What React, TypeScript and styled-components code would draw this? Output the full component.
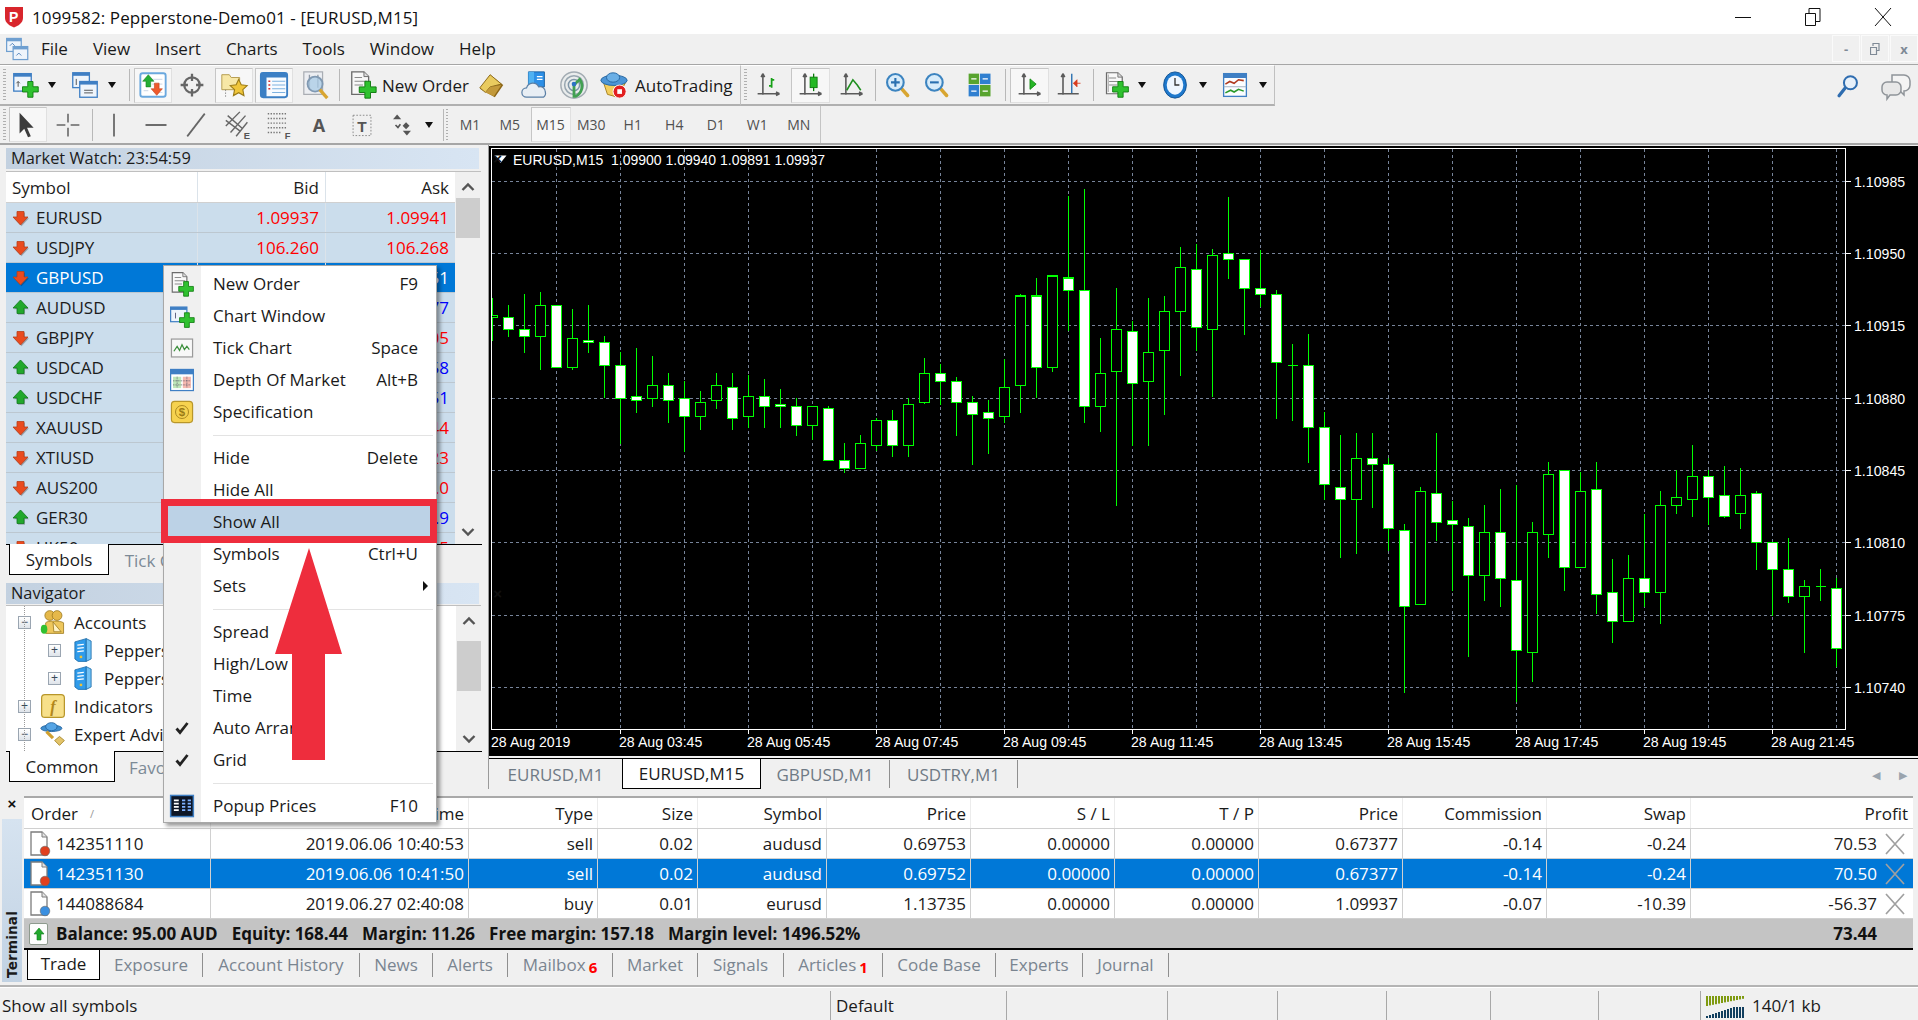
import React from 'react';
import styled, { createGlobalStyle } from 'styled-components';

const UI = `"Open Sans", "Noto Sans", "Liberation Sans", sans-serif`;

const Global = createGlobalStyle`
  html, body { margin: 0; padding: 0; background: #f0f0f0; }
  * { box-sizing: border-box; }
`;

const Page = styled.div`
  position: relative; width: 1918px; height: 1020px; overflow: hidden;
  background: #f0f0f0; color: #1a1a1a; font-family: ${UI}; font-size: 17px;
  display: flex; flex-direction: column;
`;

/* ---- title / menu ---- */
const TitleBar = styled.div`
  height: 34px; background: #fff; display: flex; align-items: center; padding-left: 3px; flex: none;
`;
const TitleText = styled.div`font-size: 17px; margin-left: 7px; color: #111; letter-spacing: .1px;`;
const WinButtons = styled.div`margin-left: auto; display: flex;`;
const WinButton = styled.div`
  width: 70px; height: 34px; display: flex; align-items: center; justify-content: center;
`;
const MenuBar = styled.div`
  height: 31px; flex: none; display: flex; align-items: center; padding-left: 5px;
  border-bottom: 1px solid #a6a6a6;
`;
const MenuItems = styled.div`display: flex; gap: 25px; margin-left: 10px; font-size: 17px; padding-bottom: 2px;`;
const MdiButtons = styled.div`margin-left: auto; display: flex; gap: 1px; align-self: flex-start;  padding-top: 1px;`;
const MdiButton = styled.div`
  width: 28px; height: 27px; border: 1px solid #fafafa; display: flex; align-items: center; justify-content: center;
  color: #7f8a96; font-size: 13px; font-weight: 700;
`;

/* ---- toolbars ---- */
const ToolRow = styled.div<{ $h: number; $line?: boolean }>`
  height: ${p => p.$h}px; flex: none; display: flex; align-items: stretch;
  ${p => p.$line ? 'border-bottom: 2px solid #a6a6a6;' : ''}
`;
const ToolGroup = styled.div<{ $w: number }>`
  width: ${p => p.$w}px; flex: none; display: flex; align-items: center;
  border-right: 1px solid #c0c0c0; border-bottom: 2px solid #b0b0b0; border-top: 1px solid #fff;
`;
const ToolGroupFlat = styled(ToolGroup)`border-bottom: none; border-top: none; border-right: 1px solid #c4c4c4;`;
const Grip = styled.div`
  width: 3px; height: 32px; margin: 0 3px 0 3px; flex: none;
  background: repeating-linear-gradient(to bottom, #b0b0b0 0 1px, transparent 1px 3px);
`;
const TfGrip = styled(Grip)`width: 2px; margin: 0 0 0 2px;`;
const ToolBtn = styled.div<{ $w?: number; $ml?: number; $active?: boolean }>`
  width: ${p => p.$w ?? 38}px; height: 35px; margin-left: ${p => p.$ml ?? 0}px; flex: none;
  display: flex; align-items: center; justify-content: center;
  ${p => p.$active ? 'background: #f7f7f7; border: 1px solid #e0e0e0; border-top-color: #c6c6c6; border-left-color: #c6c6c6;' : ''}
`;
const ToolSep = styled.div<{ $ml: number }>`
  width: 1px; height: 32px; background: #b8b8b8; margin-left: ${p => p.$ml}px; flex: none;
`;
const Drop = styled.div<{ $ml?: number; $w?: number }>`
  width: ${p => p.$w ?? 14}px; margin-left: ${p => p.$ml ?? 0}px; flex: none; display: flex; justify-content: center;
  &::after { content: ''; border: 4px solid transparent; border-top: 6px solid #111; border-bottom: 0; }
`;
const ToolText = styled.span<{ $ml?: number }>`
  font-size: 17px; margin-left: ${p => p.$ml ?? 0}px; white-space: nowrap; color: #1a1a1a;
`;
const LetterTool = styled.b`color: #555; font-size: 18px;`;
const TF = styled.div<{ $active?: boolean; $w?: number; $ml?: number }>`
  width: ${p => p.$w ?? 41.5}px; height: 35px; display: flex; align-items: center; justify-content: center; flex: none;
  font-size: 14px; color: #505050; margin-left: ${p => p.$ml ?? 0}px;
  ${p => p.$active ? 'background: #f7f7f7; border: 1px solid #e0e0e0; border-top-color: #c6c6c6; border-left-color: #c6c6c6;' : ''}
`;
const ToolRight = styled.div`margin-left: auto; display: flex; align-items: center; gap: 19px; padding-right: 6px;`;

/* ---- main ---- */
const Main = styled.div`height: 644px; flex: none; display: flex;`;
const LeftCol = styled.div`width: 489px; flex: none; border-right: 1px solid #9a9a9a; padding: 3px 0 0 0;`;
const PanelTitle = styled.div<{ $mt?: number }>`
  height: 21px; margin: ${p => p.$mt ?? 0}px 9px 0 6px; padding: 0 0 3px 5px;
  background: linear-gradient(to right, #c3d1e0, #d8e5f3);
  display: flex; align-items: center; font-size: 16.4px; position: relative; color: #1c1c1c;
`;
const PanelClose = styled.div`
  position: absolute; right: -23px; top: 1px; font-size: 15px; font-weight: 800; color: #111; line-height: 19px;
  font-family: "Liberation Sans", sans-serif;
`;
const WatchBody = styled.div`
  height: 373px; margin: 2px 0 0 6px; display: flex; border-top: 1px solid #bfbfbf; overflow: hidden; width: 475px;
`;
const WatchTable = styled.div`width: 449px; flex: none;`;
const WatchRow = styled.div<{ $sel?: boolean; $head?: boolean }>`
  height: ${p => p.$head ? 31 : 30}px; display: grid; grid-template-columns: 191px 128px 130px;
  background: ${p => p.$sel ? '#0078d7' : p.$head ? '#fff' : '#cbddec'};
  border-bottom: 1px solid ${p => p.$head ? '#d0d0d0' : '#bcc7d0'};
  color: ${p => p.$sel ? '#fff' : '#1c1c1c'}; font-size: 17px;
`;
const SymbolCell = styled.div`display: flex; align-items: center; padding-left: 6px; gap: 6px; white-space: nowrap;`;
const QuoteCell = styled.div<{ $c?: string }>`
  display: flex; align-items: center; justify-content: flex-end; padding-right: 6px;
  border-left: 1px solid #dbe3ea; color: ${p => p.$c ?? 'inherit'};
`;
const ScrollCol = styled.div`width: 25px; flex: none; display: flex; flex-direction: column; align-items: center; background: #f0f0f0;`;
const ScrollThumb = styled.div<{ $t: number; $h: number }>`
  width: 24px; height: ${p => p.$h}px; margin-top: ${p => p.$t}px; background: #cdcdcd;
`;
const Chevron = styled.div<{ $down?: boolean; $t?: number; $auto?: boolean }>`
  margin-top: ${p => p.$auto ? 'auto' : `${p.$t ?? 0}px`}; height: 12px; display: flex; align-items: center;
  ${p => p.$auto ? 'margin-bottom: 6px;' : ''}
  svg { transform: ${p => p.$down ? 'rotate(180deg)' : 'none'}; }
`;
const SideTabs = styled.div`
  height: 30px; margin-left: 6px; width: 476px; display: flex; border-top: 1px solid #000; position: relative;
`;
const SideTab = styled.div<{ $w: number; $on?: boolean; $ml?: number }>`
  width: ${p => p.$w}px; margin-left: ${p => p.$ml ?? 0}px; height: ${p => p.$on ? 31 : 30}px; display: flex; align-items: center; justify-content: center; font-size: 17px;
  white-space: nowrap;
  ${p => p.$on ? 'background: #fff; border: 1px solid #000; border-top: none; margin-top: -1px;' : 'color: #7c8a96;'}
`;
const PanelGap = styled.div<{ $h: number }>`
  height: ${p => p.$h}px;
`;
const TreeBody = styled.div`
  height: 146px; margin: 1px 0 0 6px; width: 475px; display: flex; background: #fff; border-top: 1px solid #bfbfbf; overflow: hidden;
`;
const TreeList = styled.div`flex: 1; position: relative; padding-top: 2px;`;
const TreeRow = styled.div<{ $indent?: number }>`
  height: 28px; display: flex; align-items: center; padding-left: ${p => 12 + (p.$indent ?? 0) * 30}px; font-size: 17px; white-space: nowrap;
`;
const Expander = styled.div`
  width: 13px; height: 13px; border: 1px solid #9aa5b1; background: linear-gradient(#fff, #dfe4ea);
  display: flex; align-items: center; justify-content: center; font: 12px/11px "Liberation Sans", sans-serif; color: #3a4a5a; flex: none;
  margin-right: 9px;
`;
const TreeIcon = styled.div`width: 26px; height: 26px; display: flex; align-items: center; justify-content: center; margin-right: 8px; flex: none;`;
const TreeGuide = styled.div`
  position: absolute; left: 18px; top: 0; bottom: 0; border-left: 1px dotted #9a9a9a;
`;

/* ---- chart ---- */
const ChartCol = styled.div`flex: 1; display: flex; flex-direction: column; padding-top: 1px;`;
const ChartBox = styled.div`height: 610px; background: #000; flex: none; line-height: 0;`;
const ChartHeader = styled.text`white-space: pre; font-size: 14px;`;
const ChartTabs = styled.div`
  height: 31px; margin-top: 2px; border-top: 1px solid #000; display: flex; position: relative; font-size: 17px;
`;
const ChartTab = styled.div<{ $w: number; $on?: boolean; $sep?: boolean }>`
  width: ${p => p.$w}px; height: 28px; display: flex; align-items: center; justify-content: center; flex: none; white-space: nowrap;
  margin-top: ${p => p.$on ? 0 : 1}px;
  ${p => p.$on ? 'background: #fff; border: 1px solid #000; border-top: none; height: 30px;' : 'color: #6f7a85;'}
  ${p => p.$sep ? 'border-right: 1px solid #8f8f8f;' : ''}
`;
const TabArrows = styled.div`
  margin-left: auto; display: flex; align-items: center; gap: 19px; padding-right: 11px; color: #9aa4ae; font-size: 11px;
`;

/* ---- terminal ---- */
const Terminal = styled.div`height: 196px; flex: none; display: flex; border-top: 0;`;
const TermSide = styled.div`width: 24px; flex: none; display: flex; flex-direction: column; align-items: center; padding-top: 6px;`;
const TermClose = styled.div`font: 800 15px/18px "Liberation Sans", sans-serif; color: #111;`;
const TermLabel = styled.div`
  margin-top: 6px; width: 20px; height: 163px; background: linear-gradient(to bottom, #d6e3f0, #c1d2e3);
  display: flex; align-items: flex-end; justify-content: center; padding-bottom: 4px;
`;
const TermLabelText = styled.span`
  writing-mode: vertical-rl; transform: rotate(180deg); font: 700 13.5px "DejaVu Sans", sans-serif; color: #1a1a1a; letter-spacing: .2px;
`;
const TermMain = styled.div`flex: 1; padding-top: 7px; display: flex; flex-direction: column; min-width: 0;`;
const TermTable = styled.div`border-top: 2px solid #a9a9a9; background: #fff; margin-right: 5px;`;
const TermRow = styled.div<{ $sel?: boolean; $head?: boolean }>`
  height: ${p => p.$head ? 31 : 30}px; display: grid;
  grid-template-columns: 187px 258px 129px 100px 129px 144px 144px 144px 144px 144px 144px 222px;
  background: ${p => p.$sel ? '#0078d7' : '#fff'}; color: ${p => p.$sel ? '#fff' : '#1a1a1a'};
  border-bottom: 1px solid #d0d0d0; font-size: 17px;
`;
const TermCell = styled.div<{ $left?: boolean; $pr?: number; $head?: boolean }>`
  display: flex; align-items: center; justify-content: ${p => p.$left ? 'flex-start' : 'flex-end'};
  padding: 0 ${p => p.$pr ?? 4}px 0 ${p => p.$left ? 7 : 0}px; border-right: 1px solid ${p => p.$head ? '#ececec' : '#d0d0d0'}; white-space: nowrap; overflow: hidden;
  &:last-child { border-right: none; }
`;
const OrderCell = styled(TermCell)`padding-left: 5px; gap: 5px;`;
const SortMark = styled.span`color: #999; font-size: 11px; margin-left: 12px;`;
const CloseMark = styled.span`
  width: 22px; display: flex; justify-content: center; flex: none; margin-left: 7px;
`;
const SummaryRow = styled.div`
  height: 31px; background: #c4c4c4; border-bottom: 2px solid #000; display: flex; align-items: center;
  padding: 0 36px 0 5px; font-weight: 700; font-size: 17px; white-space: nowrap; color: #111;
`;
const SummaryIcon = styled.div`
  width: 19px; height: 22px; background: #fdfdfd; border: 1px solid #8e9a8e; border-radius: 2px; margin-right: 8px;
  display: flex; align-items: center; justify-content: center; flex: none;
`;
const SummaryItem = styled.span`margin-right: 14px;`;
const SummaryTotal = styled.span`margin-left: auto;`;
const TermTabs = styled.div`height: 31px; display: flex; align-items: flex-start; font-size: 17px;`;
const TermTab = styled.div<{ $w: number; $on?: boolean }>`
  width: ${p => p.$w}px; flex: none; height: ${p => p.$on ? 30 : 24}px; display: flex; align-items: center; justify-content: center; white-space: nowrap; position: relative;
  ${p => p.$on ? 'background: #fff; border: 1px solid #000; border-top: none; margin-left: 3px; padding-bottom: 2px;' : 'color: #7a8590; border-right: 1px solid #8f8f8f; margin-top: 3px; padding-bottom: 2px;'}
`;
const TabBadge = styled.span`color: #f00; font-weight: 700; font-size: 15px; margin: 6px 0 0 3px; line-height: 14px;`;
const Status = styled.div`
  height: 35px; flex: none; border-top: 2px solid #b4b4b4; display: flex; font-size: 17px;
  box-shadow: inset 0 1px 0 #fff;
`;
const StatusCell = styled.div<{ $w?: number; $grow?: boolean }>`
  ${p => p.$grow ? 'flex: 1;' : `width: ${p.$w}px; flex: none;`}
  display: flex; align-items: center; padding-left: ${p => p.$grow ? 5 : 2}px; margin: 4px 0 0 0; gap: 6px;
  &+& { border-left: 1px solid #a8a8a8; padding-left: 5px; }
`;

/* ---- context menu and overlays ---- */
const Menu = styled.div`
  position: absolute; left: 163px; top: 265px; width: 274px; height: 558px; background: #fff; border: 1px solid #a8a8a8;
  box-shadow: 3px 3px 4px rgba(0,0,0,.4); padding-top: 2px; z-index: 5;
  background-image: linear-gradient(to right, #f0f0f0 37px, transparent 37px);
`;
const MenuRow = styled.div<{ $hi?: boolean }>`
  height: 32px; display: flex; align-items: center; font-size: 17px; color: #1a1a1a; position: relative;
  padding: 0 18px 2px 49px; justify-content: space-between; white-space: nowrap;
  ${p => p.$hi ? 'background: #bcd2e6;' : ''}
`;
const MenuIcon = styled.div`
  position: absolute; left: 2px; top: 3px; width: 32px; height: 26px; display: flex; align-items: center; justify-content: center;
`;
const MenuSep = styled.div`
  height: 14px; margin-left: 49px; margin-right: 3px; display: flex; align-items: center;
  &::after { content: ''; flex: 1; height: 1px; background: #e3e3e3; }
`;
const SubArrow = styled.span`
  position: absolute; right: 8px; top: 11px; border: 5px solid transparent; border-left: 5px solid #111; border-right: 0;
`;
const RedBox = styled.div`
  position: absolute; left: 161px; top: 499px; width: 276px; height: 44px; border: 7px solid #ee2d3d; z-index: 6;
`;
const ArrowSvg = styled.svg`position: absolute; left: 270px; top: 545px; z-index: 7;`;

/* ---- icons ---- */
const Svg: React.FC<{ s?: number; vb?: string; children: React.ReactNode }> = ({ s = 28, vb = '0 0 32 32', children }) => (
  <svg width={s} height={s} viewBox={vb}>{children}</svg>
);
const Plus = ({ x = 20, y = 22 }: { x?: number; y?: number }) => (
  <path d={`M${x - 3} ${y - 9}h6v6h6v6h-6v6h-6v-6h-6v-6h6z`} fill="#2fc12f" stroke="#0f7a0f" strokeWidth="1" />
);
const Win = ({ x, y, w = 18, h = 18, c = '#3f7fc4' }: { x: number; y: number; w?: number; h?: number; c?: string }) => (
  <g>
    <rect x={x} y={y} width={w} height={h} fill="#eef4fb" stroke={c} strokeWidth="1.5" />
    <rect x={x} y={y} width={w} height={3.5} fill={c} />
  </g>
);
const Doc = ({ x = 4, y = 2 }: { x?: number; y?: number }) => (
  <g>
    <path d={`M${x} ${y}h13l5 5v19h-18z`} fill="#f8f8f8" stroke="#6b6b6b" strokeWidth="1.4" />
    <path d={`M${x + 13} ${y}v5h5`} fill="#ddd" stroke="#6b6b6b" />
    <path d={`M${x + 3} ${y + 6}h8M${x + 3} ${y + 10}h13M${x + 3} ${y + 14}h9`} stroke="#8a8a8a" strokeWidth="1.2" />
  </g>
);
const Axes = () => (
  <path d="M9 3v24M3 26h25M9 3l-2 4M9 3l2 4M28 26l-4-2M28 26l-4 2" stroke="#5a5a5a" strokeWidth="1.8" fill="none" />
);
const Magnifier = ({ sign }: { sign: '+' | '-' | '' }) => (
  <g>
    <path d="M19 19l8 9" stroke="#d8a530" strokeWidth="4" strokeLinecap="round" />
    <circle cx="13" cy="13" r="9.5" fill="#d8ecfa" stroke="#3c84c0" strokeWidth="2.4" />
    {sign && <path d={`M8 13h10${sign === '+' ? 'M13 8v10' : ''}`} stroke="#2a70b0" strokeWidth="2.4" />}
  </g>
);

const Icons = {
  logo: <svg width="22" height="22" viewBox="0 0 22 22"><path d="M2 1h18v11c0 5-5 8-9 9.500C7 20 2 17 2 12z" fill="#d8262c" /><text x="6" y="16" fontSize="14" fontWeight="700" fontFamily="Liberation Sans" fill="#fff">P</text></svg>,
  mdi: <Svg s={26}><Win x={2} y={3} w={18} h={16} c="#6f9fd0" /><Win x={10} y={13} w={18} h={16} c="#6f9fd0" /><path d="M6 12l3-3 3 3M14 24l3-3 3 3" stroke="#3a70b0" fill="none" /></Svg>,
  newChart: <Svg><Win x={2} y={3} w={20} h={20} /><path d="M7 12v6M7 12l-2 2M7 12l2 2" stroke="#444" fill="none" /><Plus x={21} y={21} /></Svg>,
  profiles: <Svg><Win x={2} y={2} w={19} h={17} /><Win x={10} y={12} w={20} h={18} /><path d="M6 9v7M15 22h10M15 25h10" stroke="#444" /></Svg>,
  watch: <Svg s={30}><rect x="2.500" y="3.500" width="27" height="25" rx="2.500" fill="#fff" stroke="#6aa8de" strokeWidth="2" /><path d="M12 10h14M15 15h11M6 22h5M18 24h8" stroke="#d5deea" strokeWidth="1.300" /><path d="M11 5l-6 7h3.500v6h5v-6H17z" fill="#24ad35" stroke="#14801f" strokeWidth=".6" /><path d="M20 27l6-7h-3.500v-6h-5v6H14z" fill="#ee5a2c" stroke="#bd3c17" strokeWidth=".6" /></Svg>,
  crosshair: <Svg s={26}><circle cx="16" cy="16" r="9.500" fill="none" stroke="#666" strokeWidth="2.800" /><path d="M16 2v9M16 21v9M2 16h9M21 16h9" stroke="#666" strokeWidth="2.800" /></Svg>,
  navigator: <Svg s={30}><path d="M3 5h8l2 3h9v3l-2 10H3z" fill="#f7e7a6" stroke="#b39a4c" /><path d="M7 21v9" stroke="#888" strokeDasharray="1.500 1.500" /><path d="M21 10l2.700 5.800 6.300.8-4.600 4.400 1.200 6.300-5.600-3.100-5.600 3.100 1.200-6.300-4.600-4.400 6.300-.8z" fill="#f0c63b" stroke="#9c7c18" strokeWidth="1.200" /></Svg>,
  terminal: <Svg s={30}><rect x="2" y="3" width="28" height="26" rx="2.500" fill="#f7fbff" stroke="#3b7fc4" strokeWidth="2" /><rect x="2" y="3" width="28" height="5" fill="#3b7fc4" /><rect x="2" y="3" width="6" height="26" fill="#3b7fc4" /><path d="M14 12h14M14 16h14M14 20h14M14 24h14" stroke="#7eb2e0" strokeWidth="1.300" /><path d="M10 12h2M10 16h2M10 20h2" stroke="#d62b2b" strokeWidth="1.600" /></Svg>,
  tester: <Svg s={30}><rect x="3" y="2" width="20" height="24" fill="#eceef2" stroke="#a9adb3" strokeWidth="1.300" /><path d="M9 5v16M18 5v14" stroke="#8f98a3" strokeWidth="1.400" /><circle cx="15" cy="15" r="8" fill="#a9cbe6" fillOpacity=".75" stroke="#8099b2" strokeWidth="2" /><path d="M20 21l8 9" stroke="#d8a530" strokeWidth="3.500" /></Svg>,
  newOrder: <Svg s={30}><Doc /><Plus x={21} y={21} /></Svg>,
  gold: <Svg s={30}><path d="M3 20L14 5l14 11-9 13z" fill="#8c6516" /><path d="M3 19L14 5l12 10-12 3-5 6z" fill="#e9cb5f" stroke="#8c6a1c" strokeWidth="1" /><path d="M14 18l-5 6 9 4 8-12z" fill="#c2993a" /></Svg>,
  market: <Svg s={30}><path d="M9 2h17v16H9z" fill="#2d8fe6" stroke="#175e9f" /><path d="M9 2h6v16H9z" fill="#4fb1f2" /><path d="M18 7h6M18 10h6" stroke="#fff" strokeWidth="1.300" /><path d="M7 29a5 5 0 0 1 0-10 7 7 0 0 1 13-1 5.500 5.500 0 0 1 7 5.500 5 5 0 0 1-2 5.500z" fill="#e8eef4" stroke="#5a7fa5" strokeWidth="1.300" /></Svg>,
  signal: <Svg s={30}><circle cx="16" cy="16" r="14" fill="#e9ecec" stroke="#a3acb3" strokeWidth="1.600" /><circle cx="16" cy="16" r="10" fill="none" stroke="#98a6b0" strokeWidth="1.600" /><circle cx="16" cy="16" r="6" fill="none" stroke="#7f96a8" strokeWidth="1.600" /><path d="M22 10a12 12 0 0 1-4 18h-2V16z" fill="none" stroke="#41a052" strokeWidth="3" /><circle cx="16" cy="15" r="2.500" fill="#2d72c4" /></Svg>,
  auto: <Svg s={30}><path d="M5 14l4 12 11 3 8-15z" fill="#f3cf5e" stroke="#a6811f" /><ellipse cx="16" cy="11" rx="14" ry="5.500" fill="#4c95d6" stroke="#25659f" /><ellipse cx="15" cy="8" rx="7" ry="5" fill="#6aafe6" stroke="#25659f" /><circle cx="22" cy="23" r="7" fill="#e22020" stroke="#fff" strokeWidth="1" /><rect x="19.500" y="20.500" width="5" height="5" fill="#fff" /></Svg>,
  bars: <Svg><Axes /><path d="M19 8v11M19 10h3M19 17h-3" stroke="#17a017" strokeWidth="2" fill="none" /></Svg>,
  candles: <Svg><Axes /><path d="M19 3v20" stroke="#0a7a0a" strokeWidth="1.500" /><rect x="15" y="7" width="8" height="12" fill="#24b824" stroke="#0a7a0a" /></Svg>,
  line: <Svg><Axes /><path d="M10 22l7-12 5 6 4 6" stroke="#1f8f1f" strokeWidth="1.800" fill="none" /></Svg>,
  zoomIn: <Svg><Magnifier sign="+" /></Svg>,
  zoomOut: <Svg><Magnifier sign="-" /></Svg>,
  tile: <Svg><rect x="3" y="3" width="12" height="12" fill="#58a42e" /><rect x="16" y="3" width="12" height="12" fill="#2f7fd0" /><rect x="3" y="16" width="12" height="13" fill="#2f7fd0" /><rect x="16" y="16" width="12" height="13" fill="#58a42e" /><path d="M6 9h6M19 9h6M6 23h6M19 23h6" stroke="#fff" strokeWidth="1.500" /></Svg>,
  autoScroll: <Svg><Axes /><path d="M16 9v12l7-6z" fill="#26b526" stroke="#0f8a0f" /></Svg>,
  shift: <Svg><path d="M8 3v24M2 26h24M8 3l-2 4M8 3l2 4" stroke="#5a5a5a" strokeWidth="1.800" fill="none" /><path d="M18 3v22" stroke="#2a70b0" strokeWidth="1.600" /><path d="M28 14l-8 0M20 14l4-4v8z" fill="#d83c1e" stroke="#d83c1e" /></Svg>,
  addDoc: <Svg><Doc /><path d="M6 4v20" stroke="#999" /><Plus x={20} y={21} /></Svg>,
  clock: <Svg><ellipse cx="16" cy="16" rx="13" ry="15" fill="#1e78cc" stroke="#0f4f8f" /><ellipse cx="16" cy="16" rx="9.500" ry="11" fill="#eef6ff" /><path d="M16 8v8h5" stroke="#333" strokeWidth="1.500" fill="none" /></Svg>,
  template: <Svg><rect x="3" y="3" width="26" height="26" fill="#fbfdff" stroke="#3f7fc4" strokeWidth="1.500" /><rect x="3" y="3" width="26" height="5" fill="#3f7fc4" /><path d="M5 15l5-3 5 2 5-4 6 1" stroke="#b03a1e" strokeWidth="1.800" fill="none" /><path d="M3 18h26" stroke="#9ab" /><path d="M5 25l6-3 4 2 5-3 6 2" stroke="#2b9a2b" strokeWidth="1.800" fill="none" /></Svg>,
  search: <Svg s={26}><path d="M12 19l-7 9" stroke="#2f6db0" strokeWidth="4" strokeLinecap="round" /><circle cx="19" cy="12" r="8" fill="#e8f1fa" stroke="#2f6db0" strokeWidth="2.500" /></Svg>,
  chat: <Svg s={32}><path d="M12 5h12a6 6 0 0 1 6 6v4a6 6 0 0 1-6 6v4l-4-4h-8z" fill="#f4f4f4" stroke="#8f9499" strokeWidth="1.500" /><path d="M7 12h9a5 5 0 0 1 5 5v3a5 5 0 0 1-5 5H10l-3 4v-4a5 5 0 0 1-5-5v-3a5 5 0 0 1 5-5z" fill="#e8e8e8" stroke="#8f9499" strokeWidth="1.500" /></Svg>,
  cursor: <Svg s={30}><path d="M7 3v22l5-5 4 9 3-1-4-9h7z" fill="#3c3c3c" /></Svg>,
  cross: <Svg s={28}><path d="M16 3v10M16 19v10M3 16h10M19 16h10" stroke="#666" strokeWidth="1.800" /></Svg>,
  vline: <Svg s={28}><path d="M16 3v26" stroke="#666" strokeWidth="2" /></Svg>,
  hline: <Svg s={28}><path d="M4 16h24" stroke="#666" strokeWidth="2.200" /></Svg>,
  trend: <Svg s={28}><path d="M6 29L26 3" stroke="#666" strokeWidth="2" /></Svg>,
  channel: <Svg s={30}><path d="M3 17L18 2M8 24L24 6M14 28L26 13M3 11l16 12M5 6l16 14" stroke="#666" strokeWidth="1.500" /><text x="22" y="31" fontSize="10" fontWeight="700" fill="#555" fontFamily="Liberation Sans">E</text></Svg>,
  fib: <Svg s={30}><path d="M4 4h20M4 9h20M4 14h20M4 19h20M4 24h14" stroke="#777" strokeWidth="1.500" strokeDasharray="1.500 1.500" /><text x="22" y="31" fontSize="10" fontWeight="700" fill="#555" fontFamily="Liberation Sans">F</text></Svg>,
  textBox: <Svg s={26}><rect x="5" y="4" width="22" height="25" fill="none" stroke="#777" strokeDasharray="2 2" /><text x="16" y="24" textAnchor="middle" fontSize="19" fontWeight="700" fill="#555" fontFamily="Liberation Sans">T</text></Svg>,
  arrows: <Svg s={26}><path d="M10 3l-5 6h10z" fill="#555" /><path d="M22 29l-5-6h10z" fill="#555" /><path d="M8 16l3 3 3-4" stroke="#555" strokeWidth="2" fill="none" /><rect x="18" y="14" width="6" height="6" fill="#555" transform="rotate(45 21 17)" /></Svg>,
  tick: <Svg s={26}><rect x="3" y="5" width="26" height="22" fill="#f8f8f8" stroke="#9a9a9a" strokeWidth="1.500" /><path d="M6 20l4-6 3 5 3-7 3 6 3-4 3 4" stroke="#3c8f3c" strokeWidth="1.500" fill="none" /></Svg>,
  dom: <Svg s={26}><rect x="2" y="3" width="28" height="26" fill="#fff" stroke="#3f7fc4" strokeWidth="1.500" /><rect x="2" y="3" width="28" height="6" fill="#3f7fc4" /><rect x="5" y="12" width="10" height="14" fill="#bfe6b8" /><rect x="17" y="12" width="10" height="14" fill="#f6b9b0" /><path d="M5 17h22M5 22h22M10 12v14M22 12v14" stroke="#556" strokeDasharray="1 1" /></Svg>,
  spec: <Svg s={26}><rect x="3" y="3" width="26" height="26" rx="4" fill="#f6d24f" stroke="#b8962a" strokeWidth="1.500" /><circle cx="16" cy="16" r="8" fill="none" stroke="#a9861f" strokeWidth="1.200" /><text x="16" y="21" textAnchor="middle" fontSize="14" fontWeight="700" fill="#9a7a15" fontFamily="Liberation Sans">$</text></Svg>,
  chartWin: <Svg s={26}><Win x={2} y={5} w={20} h={18} /><path d="M8 12v7" stroke="#446" /><Plus x={22} y={21} /></Svg>,
  popup: <Svg s={26}><rect x="2" y="3" width="28" height="26" fill="#0d1626" stroke="#3f7fc4" strokeWidth="1.800" /><path d="M6 9h6M6 13h6M6 17h6M6 21h6" stroke="#fff" strokeWidth="2" /><path d="M16 9h4M16 13h4M16 17h4M16 21h4M23 9h4M23 13h4M23 17h4M23 21h4" stroke="#7fb0ff" strokeWidth="2" /></Svg>,
  accounts: <Svg s={26}><circle cx="12" cy="8" r="6" fill="#e5b84a" stroke="#9d7a20" /><circle cx="21" cy="8" r="6" fill="#e5b84a" stroke="#9d7a20" /><path d="M7 30V17c2-3 18-3 22 0v13z" fill="#eec75c" stroke="#9d7a20" /><path d="M16 16l10 12h-9z" fill="#fff3c4" stroke="#9d7a20" /><ellipse cx="5" cy="25" rx="4" ry="5.500" fill="#30c030" /></Svg>,
  server: <Svg s={26}><path d="M6 6l14-4v28H10l-4-3z" fill="#2f9bea" stroke="#1a6aa8" /><path d="M20 2l6 3v22l-6 3z" fill="#6fc1f5" stroke="#1a6aa8" /><path d="M9 10l8-1M9 14l8-1M9 18l8-1" stroke="#fff" strokeWidth="1.500" /><rect x="12" y="23" width="3" height="3" fill="#f1c232" /></Svg>,
  indicators: <Svg s={26}><rect x="2" y="2" width="28" height="28" rx="4" fill="#f7e08a" stroke="#b8962a" strokeWidth="1.500" /><text x="16" y="23" textAnchor="middle" fontSize="20" fontWeight="700" fontStyle="italic" fill="#b3871a" fontFamily="Liberation Serif">f</text></Svg>,
  experts: <Svg s={26}><ellipse cx="14" cy="9" rx="13" ry="4" fill="#3f8fd0" stroke="#1f5f9a" /><ellipse cx="14" cy="7" rx="7" ry="5" fill="#56a5e5" stroke="#1f5f9a" /><path d="M8 13l8 8" stroke="#d0a030" strokeWidth="4" /><path d="M24 19l6 5-6 6-6-6z" fill="#e3c46a" stroke="#a08020" /></Svg>,
};

const ArrowMark = ({ up }: { up?: boolean }) => {
  const d = up ? 'M8.500 1l7.500 8h-4v5.500H5V9H1z' : 'M8.500 16l7.500-8h-4V2.500H5V8H1z';
  return (
    <svg width="18" height="18" viewBox="0 0 18 18">
      <path d={d} fill="#000" opacity=".25" transform="translate(1 1.200)" />
      <path d={d} fill={up ? '#22a82c' : '#ea4a1e'} stroke={up ? '#137a1e' : '#b5401a'} strokeWidth=".8" />
    </svg>
  );
};
const ChevUp = () => (
  <svg width="14" height="10" viewBox="0 0 14 10"><path d="M1.500 8L7 2.500 12.500 8" fill="none" stroke="#555" strokeWidth="2.400" /></svg>
);
const OrderIcon = ({ c }: { c: string }) => (
  <svg width="22" height="26" viewBox="0 0 22 26" style={{ flex: 'none' }}>
    <path d="M2 1h11l5 5v18H2z" fill="#fff" stroke="#7c7c7c" strokeWidth="1.300" />
    <path d="M13 1v5h5" fill="#e4e4e4" stroke="#7c7c7c" />
    <circle cx="16" cy="20" r="4.800" fill={c} stroke="#666" strokeWidth=".6" />
  </svg>
);
const XMark = () => (
  <svg width="20" height="24" viewBox="0 0 20 24"><path d="M1 2l18 20M19 2L1 22" stroke="#a0a0a0" strokeWidth="1.700" /></svg>
);

/* ---- chart data (in crop units, converted below) ---- */
type C = [number, number, number, number, number];
const candles: C[] = [
  [475,602,526,532,0],[495,590,532,568,1],[462,638,568,589,1],[456,690,496,589,0],[496,682,496,682,1],[507,690,595,682,0],[495,638,601,607,1],[588,775,607,676,1],[637,912,676,775,1],[624,819,769,781,1],[648,801,736,775,0],[699,849,736,781,1],[724,935,775,829,1],[753,870,787,829,0],[699,807,736,781,0],[699,870,742,835,1],[705,864,769,829,0],[717,864,769,799,1],[747,864,793,799,1],[775,888,799,856,1],[799,900,799,856,0],[799,962,805,962,1],[909,998,961,985,1],[885,985,910,985,0],[835,932,841,916,0],[810,951,841,916,1],[775,951,793,916,0],[654,793,700,787,0],[672,795,700,724,1],[711,888,724,787,1],[768,975,787,823,1],[780,942,817,835,1],[657,849,742,829,0],[462,819,468,736,0],[414,775,468,682,1],[408,696,408,682,0],[168,573,414,451,1],[147,849,451,799,1],[594,876,700,799,0],[444,1097,568,694,0],[544,917,574,730,1],[474,917,637,724,0],[468,825,514,631,0],[321,707,382,514,0],[312,634,388,562,1],
  [327,771,346,568,0],[171,417,340,358,1],[358,585,358,445,1],[331,500,445,463,1],[450,837,463,667,1],[612,843,676,676,1],[582,969,676,862,1],[817,1080,862,1033,1],[885,1253,1042,1078,1],[880,1242,955,1078,0],[880,1103,955,973,1],[955,1232,973,1165,1],[1152,1660,1172,1399,1],[1042,1394,1054,1393,0],[880,1203,1060,1147,1],[1083,1353,1141,1153,1],[1134,1550,1159,1306,1],[1095,1382,1177,1306,0],[1047,1400,1177,1315,1],[1035,1687,1321,1531,1],[1146,1625,1177,1537,0],[966,1253,1003,1183,0],[991,1352,991,1282,1],[996,1282,1054,1282,0],[966,1422,1048,1363,1],[1257,1508,1357,1444,1],[1245,1444,1315,1444,0],[1123,1400,1315,1357,1],[1053,1451,1096,1357,0],[990,1122,1072,1096,0],[915,1131,1009,1078,0],[990,1155,1009,1072,1],[978,1135,1066,1129,1],[984,1167,1066,1120,0],[1053,1290,1060,1207,1],[1207,1427,1207,1288,1],[1194,1388,1288,1369,1],[1320,1538,1339,1369,0],[1287,1383,1339,1339,1],[1315,1580,1345,1525,1],
];
const Y = (v: number) => 140 + v / 3;
const prices: [string, number][] = [['1.10985',181.5],['1.10950',253.5],['1.10915',325.5],['1.10880',398.5],['1.10845',470.5],['1.10810',542.5],['1.10775',615.5],['1.10740',687.5]];
const dates = ['28 Aug 03:45','28 Aug 05:45','28 Aug 07:45','28 Aug 09:45','28 Aug 11:45','28 Aug 13:45','28 Aug 15:45','28 Aug 17:45','28 Aug 19:45','28 Aug 21:45'];

const Chart = () => {
  const grid = Array.from({ length: 21 }, (_, i) => Math.round(556 + i * 64) + 0.5);
  return (
    <svg width={1429} height={610} viewBox="489 146 1429 610" shapeRendering="crispEdges">
      <defs><clipPath id="frame"><rect x="491" y="148" width="1355" height="581" /></clipPath></defs>
      <g stroke="#77849a" strokeWidth="1" strokeDasharray="3 3">
        {prices.map(([, y]) => <line key={y} x1="492" x2="1846" y1={y} y2={y} />)}
        {grid.map(x => <line key={x} x1={x} x2={x} y1="149" y2="729" />)}
      </g>
      <g clipPath="url(#frame)">
        {candles.map(([wt, wb, bt, bb, white], i) => {
          const x = Math.round(492.4 + i * 16) + 0.5;
          const t = Y(bt), b = Y(bb);
          return (
            <g key={i}>
              <line x1={x} x2={x} y1={Y(wt)} y2={Y(wb)} stroke="#00ff00" />
              {bt === bb
                ? <line x1={x - 5} x2={x + 5} y1={t} y2={t} stroke="#00ff00" />
                : <rect x={x - 5} y={t} width={10} height={b - t} fill={white ? '#fff' : '#000'} stroke="#00ff00" strokeWidth="1.200" />}
            </g>
          );
        })}
      </g>
      <rect x="491.500" y="148.500" width="1354" height="581" fill="none" stroke="#fff" />
      {prices.map(([, y]) => <line key={y} x1="1846" x2="1851" y1={y} y2={y} stroke="#fff" />)}
      {[620.5, 748.5, 876.5, 1004.5, 1132.5, 1260.5, 1388.5, 1516.5, 1644.5, 1772.5].map(x => <line key={x} x1={x} x2={x} y1="729" y2="734" stroke="#fff" />)}
      <g fill="#fff" fontFamily="Liberation Sans, sans-serif" fontSize="14.150" shapeRendering="auto">
        <path d="M494.500 155.500h12l-6 7.500z" />
        <ChartHeader x="513" y="165">{'EURUSD,M15  1.09900 1.09940 1.09891 1.09937'}</ChartHeader>
        {prices.map(([p, y]) => <text key={p} x="1854" y={y + 5.5}>{p}</text>)}
        <text x="491" y="747">28 Aug 2019</text>
        {dates.map((d, i) => <text key={d} x={619 + i * 128} y="747">{d}</text>)}
      </g>
    </svg>
  );
};

const watch: [string, boolean, string, string, string][] = [
  ['EURUSD', false, '1.09937', '1.09941', '#f00'],
  ['USDJPY', false, '106.260', '106.268', '#f00'],
  ['GBPUSD', false, '1.22145', '1.22151', '#fff'],
  ['AUDUSD', true, '0.67370', '0.67377', '#00f'],
  ['GBPJPY', false, '129.790', '129.805', '#f00'],
  ['USDCAD', true, '1.32845', '1.32858', '#00f'],
  ['USDCHF', true, '0.97840', '0.97851', '#00f'],
  ['XAUUSD', false, '1540.14', '1540.44', '#f00'],
  ['XTIUSD', false, '56.13', '56.23', '#f00'],
  ['AUS200', false, '6556.0', '6560.0', '#f00'],
  ['GER30', true, '11750.9', '11752.9', '#00f'],
  ['HK50', false, '25600', '25615', '#f00'],
];

const orders = [
  ['142351110','2019.06.06 10:40:53','sell','0.02','audusd','0.69753','0.00000','0.00000','0.67377','-0.14','-0.24','70.53','#e0401e',false],
  ['142351130','2019.06.06 10:41:50','sell','0.02','audusd','0.69752','0.00000','0.00000','0.67377','-0.14','-0.24','70.50','#e0401e',true],
  ['144088684','2019.06.27 02:40:08','buy','0.01','eurusd','1.13735','0.00000','0.00000','1.09937','-0.07','-10.39','-56.37','#3a8fe0',false],
] as const;

type MI = { t?: string; k?: string; icon?: React.ReactNode; check?: boolean; hi?: boolean; sub?: boolean };
const menu: MI[] = [
  { t: 'New Order', k: 'F9', icon: <Svg s={26}><Doc /><Plus x={21} y={22} /></Svg> },
  { t: 'Chart Window', icon: Icons.chartWin },
  { t: 'Tick Chart', k: 'Space', icon: Icons.tick },
  { t: 'Depth Of Market', k: 'Alt+B', icon: Icons.dom },
  { t: 'Specification', icon: Icons.spec },
  {},
  { t: 'Hide', k: 'Delete' },
  { t: 'Hide All' },
  { t: 'Show All', hi: true },
  { t: 'Symbols', k: 'Ctrl+U' },
  { t: 'Sets', sub: true },
  {},
  { t: 'Spread' },
  { t: 'High/Low' },
  { t: 'Time' },
  { t: 'Auto Arrange', check: true },
  { t: 'Grid', check: true },
  {},
  { t: 'Popup Prices', k: 'F10', icon: Icons.popup },
];
const Check = () => (
  <svg width="14" height="14" viewBox="0 0 14 14"><path d="M1.500 7.500l3.500 4L12.500 2" fill="none" stroke="#222" strokeWidth="2.800" /></svg>
);

const termTabs: [string, number, string?][] = [
  ['Exposure', 103], ['Account History', 157], ['News', 73], ['Alerts', 75], ['Mailbox', 105, '6'],
  ['Market', 85], ['Signals', 86], ['Articles', 99, '1'], ['Code Base', 113], ['Experts', 87], ['Journal', 86],
];

export default function App() {
  return (
    <Page>
      <Global />
      <TitleBar>
        {Icons.logo}
        <TitleText>1099582: Pepperstone-Demo01 - [EURUSD,M15]</TitleText>
        <WinButtons>
          <WinButton><svg width="16" height="16"><path d="M0 8.500h16" stroke="#111" /></svg></WinButton>
          <WinButton><svg width="16" height="18"><path d="M.5 5.500h10v12H.500zM4 5V.500h11v13h-4" fill="none" stroke="#111" /></svg></WinButton>
          <WinButton><svg width="18" height="20"><path d="M1 1l16 18M17 1L1 19" stroke="#111" /></svg></WinButton>
        </WinButtons>
      </TitleBar>
      <MenuBar>
        {Icons.mdi}
        <MenuItems>
          {['File','View','Insert','Charts','Tools','Window','Help'].map(m => <span key={m}>{m}</span>)}
        </MenuItems>
        <MdiButtons>
          <MdiButton>-</MdiButton>
          <MdiButton><svg width="10" height="12"><path d="M.5 4.500h6v7h-6zM3 3V.500h6v7H7" fill="none" stroke="#7f8a96" strokeWidth="1.200" /></svg></MdiButton>
          <MdiButton>x</MdiButton>
        </MdiButtons>
      </MenuBar>
      <ToolRow $h={41}>
        <ToolGroup $w={741}>
          <Grip />
          <ToolBtn $w={33}>{Icons.newChart}</ToolBtn>
          <Drop $w={20} />
          <ToolBtn $w={46}>{Icons.profiles}</ToolBtn>
          <Drop $w={8} />
          <ToolSep $ml={13} />
          <ToolBtn $ml={4} $active>{Icons.watch}</ToolBtn>
          <ToolBtn $ml={1}>{Icons.crosshair}</ToolBtn>
          <ToolBtn $ml={4} $active>{Icons.navigator}</ToolBtn>
          <ToolBtn $ml={2} $active>{Icons.terminal}</ToolBtn>
          <ToolBtn $ml={4}>{Icons.tester}</ToolBtn>
          <ToolSep $ml={4} />
          <ToolBtn $ml={4}>{Icons.newOrder}</ToolBtn>
          <ToolText>New Order</ToolText>
          <ToolBtn $ml={4}>{Icons.gold}</ToolBtn>
          <ToolBtn $ml={5}>{Icons.market}</ToolBtn>
          <ToolBtn $ml={1}>{Icons.signal}</ToolBtn>
          <ToolBtn $ml={2}>{Icons.auto}</ToolBtn>
          <ToolText $ml={2}>AutoTrading</ToolText>
        </ToolGroup>
        <ToolGroup $w={534}>
          <Grip />
          <ToolBtn>{Icons.bars}</ToolBtn>
          <ToolBtn $ml={3} $w={39} $active>{Icons.candles}</ToolBtn>
          <ToolBtn $ml={3}>{Icons.line}</ToolBtn>
          <ToolSep $ml={4} />
          <ToolBtn $ml={3}>{Icons.zoomIn}</ToolBtn>
          <ToolBtn $ml={1}>{Icons.zoomOut}</ToolBtn>
          <ToolBtn $ml={5}>{Icons.tile}</ToolBtn>
          <ToolSep $ml={6} />
          <ToolBtn $ml={4} $w={39} $active>{Icons.autoScroll}</ToolBtn>
          <ToolBtn $ml={2}>{Icons.shift}</ToolBtn>
          <ToolSep $ml={4} />
          <ToolBtn $ml={4}>{Icons.addDoc}</ToolBtn>
          <Drop $w={12} />
          <ToolBtn $ml={8}>{Icons.clock}</ToolBtn>
          <Drop $ml={3} $w={12} />
          <ToolBtn $ml={7}>{Icons.template}</ToolBtn>
          <Drop $ml={3} $w={12} />
        </ToolGroup>
        <ToolRight>{Icons.search}{Icons.chat}</ToolRight>
      </ToolRow>
      <ToolRow $h={39} $line>
        <ToolGroupFlat $w={821}>
          <Grip />
          <ToolBtn $active>{Icons.cursor}</ToolBtn>
          <ToolBtn $ml={2}>{Icons.cross}</ToolBtn>
          <ToolSep $ml={5} />
          <ToolBtn $ml={2}>{Icons.vline}</ToolBtn>
          <ToolBtn $ml={4}>{Icons.hline}</ToolBtn>
          <ToolBtn $ml={2}>{Icons.trend}</ToolBtn>
          <ToolBtn $ml={4}>{Icons.channel}</ToolBtn>
          <ToolBtn $ml={3}>{Icons.fib}</ToolBtn>
          <ToolBtn $ml={2}><LetterTool>A</LetterTool></ToolBtn>
          <ToolBtn $ml={5}>{Icons.textBox}</ToolBtn>
          <ToolBtn $ml={2}>{Icons.arrows}</ToolBtn>
          <Drop $ml={2} $w={12} />
          <ToolSep $ml={8} />
          <TfGrip />
          <TF $w={38} $ml={3}>M1</TF>
          <TF>M5</TF>
          <TF $active $w={40}>M15</TF>
          <TF>M30</TF>
          <TF>H1</TF>
          <TF>H4</TF>
          <TF>D1</TF>
          <TF>W1</TF>
          <TF>MN</TF>
        </ToolGroupFlat>
      </ToolRow>
      <Main>
        <LeftCol>
          <PanelTitle>Market Watch: 23:54:59<PanelClose>×</PanelClose></PanelTitle>
          <WatchBody>
            <WatchTable>
              <WatchRow $head>
                <SymbolCell>Symbol</SymbolCell>
                <QuoteCell>Bid</QuoteCell>
                <QuoteCell>Ask</QuoteCell>
              </WatchRow>
              {watch.map(([s, up, b, a, c], i) => (
                <WatchRow key={s} $sel={i === 2}>
                  <SymbolCell><ArrowMark up={up} />{s}</SymbolCell>
                  <QuoteCell $c={c}>{b}</QuoteCell>
                  <QuoteCell $c={c}>{a}</QuoteCell>
                </WatchRow>
              ))}
            </WatchTable>
            <ScrollCol>
              <Chevron $t={9}><ChevUp /></Chevron>
              <ScrollThumb $t={5} $h={40} />
              <Chevron $auto $down><ChevUp /></Chevron>
            </ScrollCol>
          </WatchBody>
          <SideTabs>
            <SideTab $w={100} $ml={3} $on>Symbols</SideTab>
            <SideTab $w={110}>Tick Chart</SideTab>
          </SideTabs>
          <PanelGap $h={9} />
          <PanelTitle>Navigator<PanelClose>×</PanelClose></PanelTitle>
          <TreeBody>
            <TreeList>
              <TreeGuide />
              <TreeRow><Expander>−</Expander><TreeIcon>{Icons.accounts}</TreeIcon>Accounts</TreeRow>
              <TreeRow $indent={1}><Expander>+</Expander><TreeIcon>{Icons.server}</TreeIcon>Pepperstone-Demo01</TreeRow>
              <TreeRow $indent={1}><Expander>+</Expander><TreeIcon>{Icons.server}</TreeIcon>Pepperstone-Live</TreeRow>
              <TreeRow><Expander>+</Expander><TreeIcon>{Icons.indicators}</TreeIcon>Indicators</TreeRow>
              <TreeRow><Expander>−</Expander><TreeIcon>{Icons.experts}</TreeIcon>Expert Advisors</TreeRow>
            </TreeList>
            <ScrollCol>
              <Chevron $t={9}><ChevUp /></Chevron>
              <ScrollThumb $t={14} $h={50} />
              <Chevron $auto $down><ChevUp /></Chevron>
            </ScrollCol>
          </TreeBody>
          <SideTabs>
            <SideTab $w={106} $ml={3} $on>Common</SideTab>
            <SideTab $w={100}>Favorites</SideTab>
          </SideTabs>
        </LeftCol>
        <ChartCol>
          <ChartBox><Chart /></ChartBox>
          <ChartTabs>
            <ChartTab $w={133}>EURUSD,M1</ChartTab>
            <ChartTab $w={139} $on>EURUSD,M15</ChartTab>
            <ChartTab $w={129} $sep>GBPUSD,M1</ChartTab>
            <ChartTab $w={128} $sep>USDTRY,M1</ChartTab>
            <TabArrows><span>◀</span><span>▶</span></TabArrows>
          </ChartTabs>
        </ChartCol>
      </Main>
      <Terminal>
        <TermSide>
          <TermClose>×</TermClose>
          <TermLabel><TermLabelText>Terminal</TermLabelText></TermLabel>
        </TermSide>
        <TermMain>
          <TermTable>
            <TermRow $head>
              <TermCell $left $head>Order<SortMark>/</SortMark></TermCell>
              {['Time','Type','Size','Symbol','Price','S / L','T / P','Price','Commission','Swap','Profit'].map((h, i) => (
                <TermCell key={i} $head $pr={i === 10 ? 5 : 4}>{h}</TermCell>
              ))}
            </TermRow>
            {orders.map(o => (
              <TermRow key={o[0]} $sel={o[13]}>
                <OrderCell $left><OrderIcon c={o[12]} />{o[0]}</OrderCell>
                {o.slice(1, 11).map((v, i) => <TermCell key={i}>{v as string}</TermCell>)}
                <TermCell $pr={7}>{o[11]}<CloseMark><XMark /></CloseMark></TermCell>
              </TermRow>
            ))}
            <SummaryRow>
              <SummaryIcon><svg width="12" height="14" viewBox="0 0 12 14"><path d="M6 1l5 6H8v6H4V7H1z" fill="#22a82c" stroke="#137a1e" strokeWidth=".6" /></svg></SummaryIcon>
              <SummaryItem>Balance: 95.00 AUD</SummaryItem>
              <SummaryItem>Equity: 168.44</SummaryItem>
              <SummaryItem>Margin: 11.26</SummaryItem>
              <SummaryItem>Free margin: 157.18</SummaryItem>
              <SummaryItem>Margin level: 1496.52%</SummaryItem>
              <SummaryTotal>73.44</SummaryTotal>
            </SummaryRow>
          </TermTable>
          <TermTabs>
            <TermTab $w={73} $on>Trade</TermTab>
            {termTabs.map(([t, w, b]) => <TermTab key={t} $w={w}>{t}{b && <TabBadge>{b}</TabBadge>}</TermTab>)}
          </TermTabs>
        </TermMain>
      </Terminal>
      <Status>
        <StatusCell $w={830}>Show all symbols</StatusCell>
        <StatusCell $w={176}>Default</StatusCell>
        <StatusCell $w={161} />
        <StatusCell $w={110} />
        <StatusCell $w={109} />
        <StatusCell $w={104} />
        <StatusCell $w={108} />
        <StatusCell $w={102} />
        <StatusCell $grow>
          <svg width="40" height="24" viewBox="0 0 40 24">
            {Array.from({ length: 13 }, (_, i) => <g key={i}>
              <rect x={i * 3} y={2} width="2" height={Math.max(1, 10 - i * .6)} fill="#7f9a10" />
              <rect x={i * 3} y={Math.max(13, 22 - i)} width="2" height={24 - Math.max(13, 22 - i)} fill="#123f5f" />
            </g>)}
          </svg>
          140/1 kb
        </StatusCell>
      </Status>
      <Menu>
        {menu.map((m, i) => m.t ? (
          <MenuRow key={i} $hi={m.hi}>
            {m.icon && <MenuIcon>{m.icon}</MenuIcon>}
            {m.check && <MenuIcon><Check /></MenuIcon>}
            <span>{m.t}</span>
            {m.k && <span>{m.k}</span>}
            {m.sub && <SubArrow />}
          </MenuRow>
        ) : <MenuSep key={i} />)}
      </Menu>
      <RedBox />
      <ArrowSvg width="80" height="220" viewBox="270 545 80 220">
        <path d="M309 548L342 654H325V760H292V654H275z" fill="#ee2d3d" />
      </ArrowSvg>
    </Page>
  );
}
